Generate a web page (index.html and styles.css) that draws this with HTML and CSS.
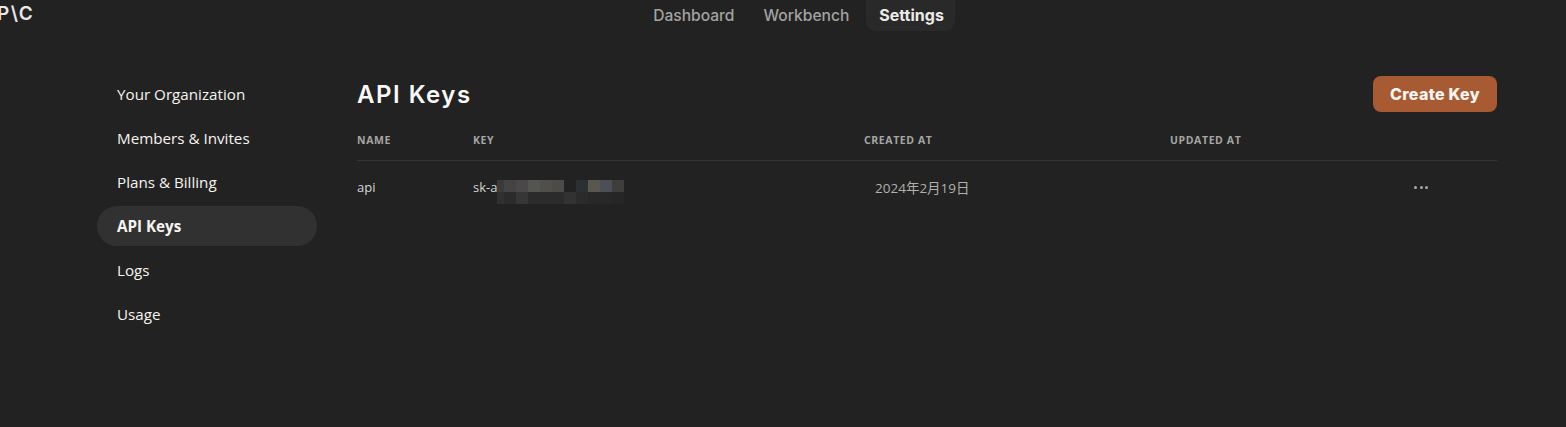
FILE: index.html
```html
<!DOCTYPE html>
<html lang="en">
<head>
    <meta charset="UTF-8">
    <meta name="viewport" content="width=device-width, initial-scale=1.0">
    <title>API Keys</title>
    <link rel="stylesheet" href="styles.css">
</head>
<body>
    <header class="topbar">
        <div class="logo">P\C</div>
        <nav class="tabs">
            <a href="#" class="tab">Dashboard</a>
            <a href="#" class="tab">Workbench</a>
            <a href="#" class="tab active">Settings</a>
        </nav>
    </header>
    <div class="layout">
        <aside class="sidebar">
            <a href="#" class="side-link">Your Organization</a>
            <a href="#" class="side-link">Members &amp; Invites</a>
            <a href="#" class="side-link">Plans &amp; Billing</a>
            <a href="#" class="side-link active">API Keys</a>
            <a href="#" class="side-link">Logs</a>
            <a href="#" class="side-link">Usage</a>
        </aside>
        <main class="content">
            <div class="title-row">
                <h1>API Keys</h1>
                <button class="create-btn">Create Key</button>
            </div>
            <div class="row head-row">
                <div class="col-name">NAME</div>
                <div class="col-key">KEY</div>
                <div class="col-created">CREATED AT</div>
                <div class="col-updated">UPDATED AT</div>
            </div>
            <div class="row key-row">
                <div class="col-name">api</div>
                <div class="col-key key-cell">
                    <span>sk-a</span>
                    <div class="mosaic">
                        <i class="a0"></i><i class="a1"></i><i class="a2"></i><i class="a3"></i><i class="a4"></i><i class="a5"></i><i></i><i class="a6"></i><i class="a7"></i><i class="a8"></i><i class="a9"></i>
                        <i class="b1"></i><i class="b2"></i><i class="b3"></i><i class="b2"></i><i class="b2"></i><i class="b2"></i><i class="b4"></i><i class="b2"></i><i class="b5"></i><i class="b5"></i><i class="b6"></i>
                    </div>
                </div>
                <div class="col-created date-cell">2024年2月19日</div>
                <div class="col-updated"></div>
                <div class="more"><i></i><i></i><i></i></div>
            </div>
        </main>
    </div>
</body>
</html>
```

FILE: styles.css
```css
* {
    box-sizing: border-box;
}
body {
    margin: 0;
    height: 427px;
    overflow: hidden;
    background-color: #222222;
    color: #f5f4ef;
    font-family: "Open Sans", "Noto Sans CJK SC", sans-serif;
}
a {
    text-decoration: none;
    color: inherit;
}
.topbar {
    position: relative;
    height: 31px;
    display: flex;
    justify-content: center;
}
.logo {
    position: absolute;
    left: -3px;
    top: 2px;
    font-family: Inter, sans-serif;
    font-size: 19px;
    font-weight: 600;
    line-height: 24px;
    letter-spacing: 1.5px;
    color: #e8e8e4;
}
.tabs {
    display: flex;
    gap: 5px;
    margin-left: 30px;
}
.tab {
    padding: 0 12px;
    height: 31px;
    line-height: 31px;
    font-family: Inter, sans-serif;
    font-size: 15.6px;
    font-weight: 500;
    color: #a3a3a0;
    border-radius: 0 0 10px 10px;
}
.tab.active {
    padding: 0 11px 0 13px;
    color: #ececea;
    font-weight: 700;
    font-size: 16px;
    background-color: #292929;
}
.layout {
    display: flex;
    padding: 43px 69px 0 97px;
}
.sidebar {
    width: 220px;
    flex: none;
    display: flex;
    flex-direction: column;
    gap: 4px;
}
.side-link {
    height: 40px;
    line-height: 40px;
    padding-left: 20px;
    border-radius: 20px;
    font-size: 15.2px;
}
.side-link.active {
    font-weight: 700;
    background-color: #313131;
}
.content {
    flex: 1;
    margin-left: 40px;
}
.title-row {
    display: flex;
    justify-content: space-between;
    align-items: center;
    height: 36px;
    margin-top: 2px;
}
h1 {
    margin: 0;
    font-family: Inter, sans-serif;
    font-size: 24px;
    font-weight: 600;
    letter-spacing: 1.5px;
    color: #f8f8f6;
}
.create-btn {
    width: 124px;
    height: 36px;
    border: 0;
    border-radius: 8px;
    background-color: #a85a32;
    color: #fbf6f2;
    font-family: Inter, sans-serif;
    font-size: 16px;
    font-weight: 800;
    letter-spacing: 0.3px;
}
.row {
    position: relative;
    display: flex;
    font-size: 13px;
}
.head-row {
    height: 49px;
    padding-top: 8px;
    align-items: center;
    border-bottom: 1px solid #353535;
    font-size: 10.5px;
    font-weight: 700;
    letter-spacing: 0.6px;
    color: #a6a6a2;
}
.key-row {
    padding-top: 17px;
    color: #d6d6d2;
}
.col-name {
    width: 116px;
    flex: none;
}
.col-key {
    width: 391px;
    flex: none;
}
.col-created {
    width: 306px;
    flex: none;
}
.key-cell {
    position: relative;
}
/* blurred out part of the key */
.mosaic {
    position: absolute;
    left: 24px;
    top: 2px;
    display: grid;
    grid-template-columns: 7px repeat(10, 12px);
    grid-auto-rows: 12px;
}
.a0 { background-color: #3a3a3a; }
.a1 { background-color: #444444; }
.a2 { background-color: #4a4848; }
.a3 { background-color: #555550; }
.a4 { background-color: #504f4c; }
.a5 { background-color: #4c4b48; }
.a6 { background-color: #2b3035; }
.a7 { background-color: #5a5650; }
.a8 { background-color: #4c5056; }
.a9 { background-color: #403e3b; }
.b1 { background-color: #303030; }
.b2 { background-color: #2b2b2b; }
.b3 { background-color: #363636; }
.b4 { background-color: #323232; }
.b5 { background-color: #282828; }
.b6 { background-color: #262626; }
.date-cell {
    margin-top: -1px;
    padding-left: 11px;
    font-size: 13.5px;
    color: #b0b0ac;
}
.more {
    position: absolute;
    right: 69px;
    top: 25px;
    display: flex;
    gap: 2.5px;
}
.more i {
    width: 3px;
    height: 3px;
    border-radius: 50%;
    background-color: #a8a8a4;
}
```
